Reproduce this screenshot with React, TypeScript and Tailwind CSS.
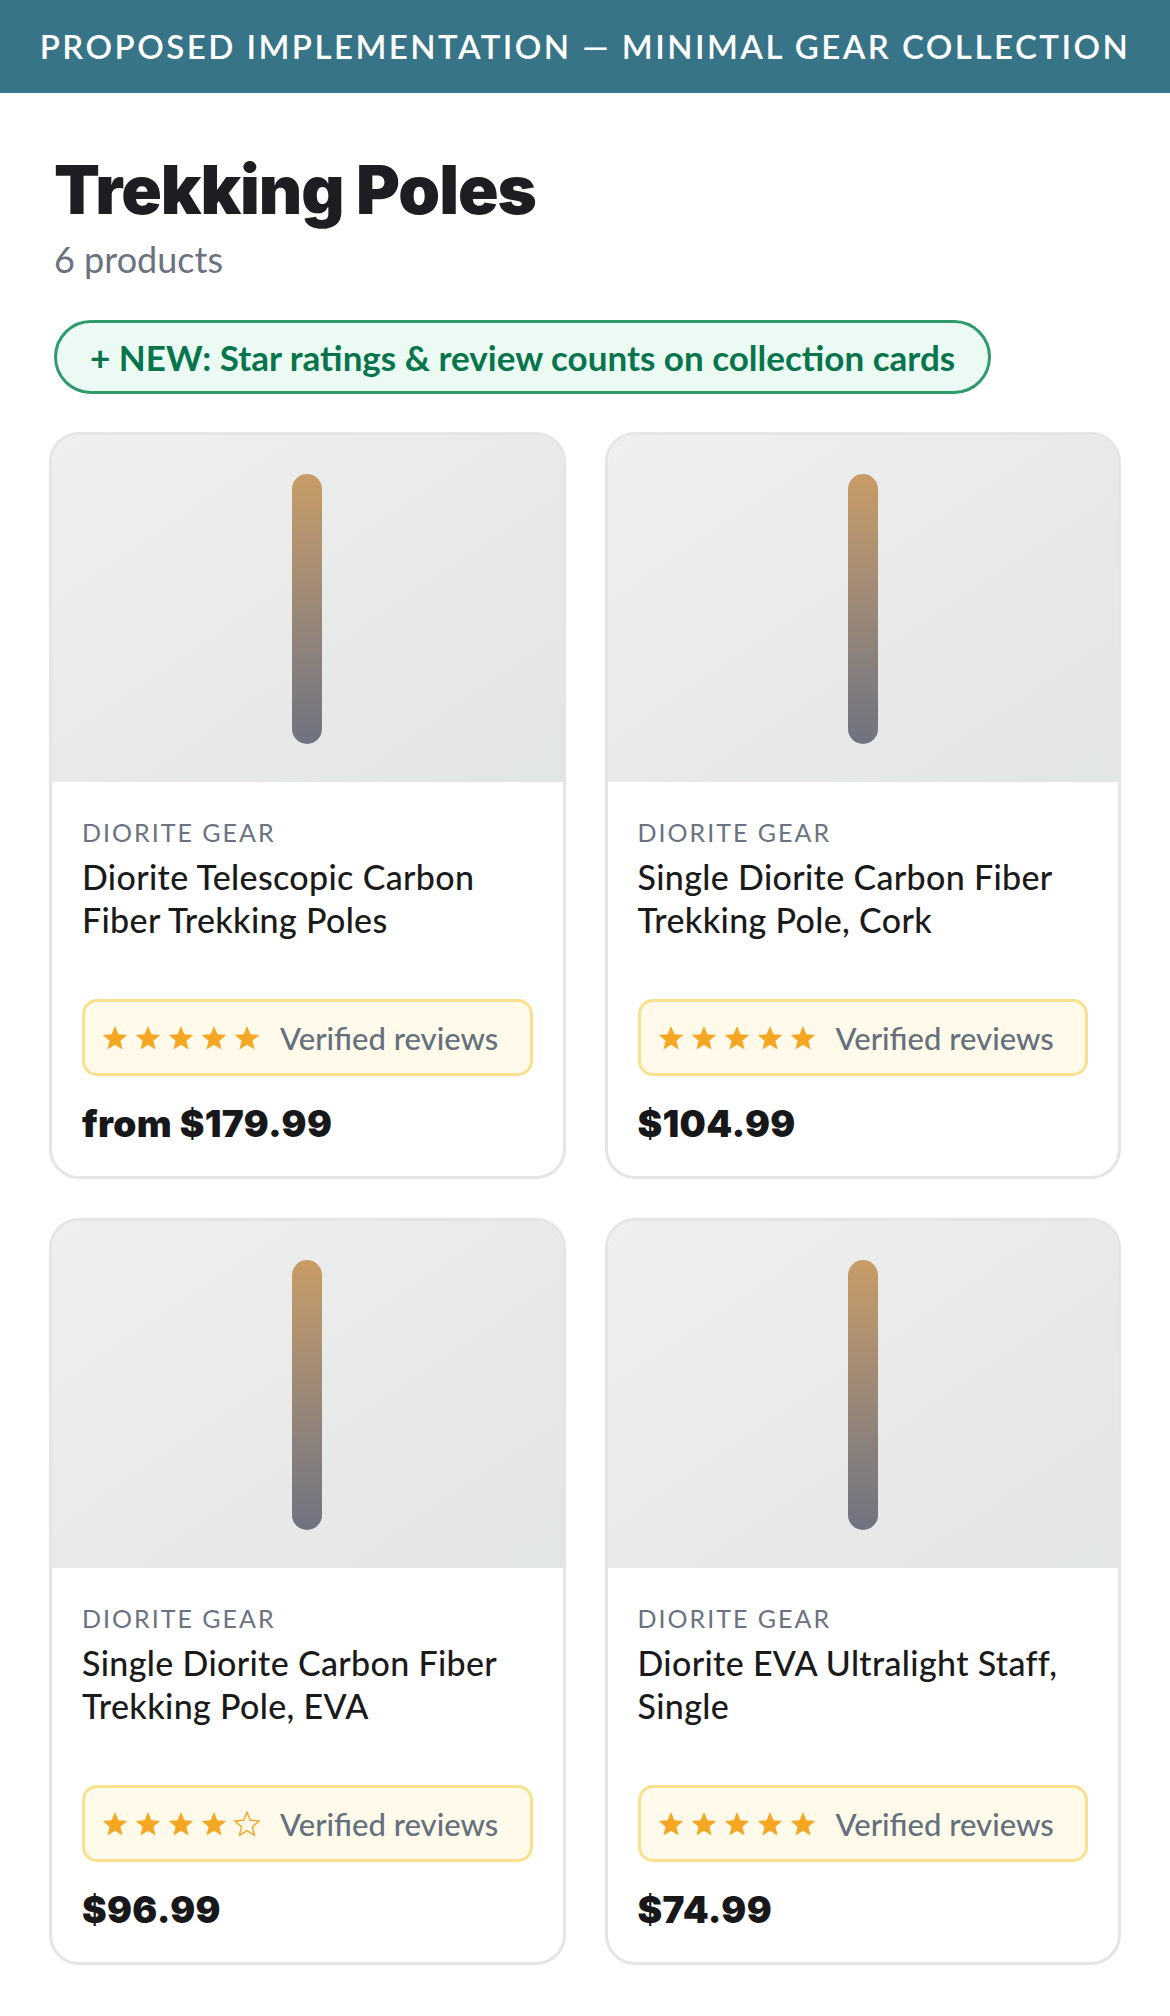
import { Fragment } from 'react'

interface Product {
  brand: string
  title: string
  price: string
  rating: number
}

const products: Product[] = [
  { brand: 'Diorite Gear', title: 'Diorite Telescopic Carbon Fiber Trekking Poles', price: 'from $179.99', rating: 5 },
  { brand: 'Diorite Gear', title: 'Single Diorite Carbon Fiber Trekking Pole, Cork', price: '$104.99', rating: 5 },
  { brand: 'Diorite Gear', title: 'Single Diorite Carbon Fiber Trekking Pole, EVA', price: '$96.99', rating: 4 },
  { brand: 'Diorite Gear', title: 'Diorite EVA Ultralight Staff, Single', price: '$74.99', rating: 5 },
]

function Star({ filled }: { filled: boolean }) {
  return (
    <svg viewBox="0 0 24 24" className="h-[26px] w-[26px]">
      <polygon
        points="12,1 15.1,8.6 23.3,9.2 17,14.5 19,22.5 12,18.2 5,22.5 7,14.5 0.7,9.2 8.9,8.6"
        fill={filled ? '#f5a623' : 'none'}
        stroke="#f5a623"
        strokeWidth={filled ? 0 : 1.3}
        strokeLinejoin="round"
      />
    </svg>
  )
}

function ProductCard({ product }: { product: Product }) {
  return (
    <div className="flex flex-col overflow-hidden rounded-[30px] border-[3px] border-[#e4e5e7] bg-white">
      <div className="flex h-[347px] items-center justify-center bg-gradient-to-br from-[#eef0ef] to-[#e1e5e4]">
        <div className="h-[270px] w-[30px] rounded-full bg-gradient-to-b from-[#c89c66] to-[#6f7381]" />
      </div>
      <div className="px-[30px] pt-[33px] pb-[29px]">
        <p className="text-[25px] leading-[34px] tracking-[0.08em] text-[#6b7280] uppercase">{product.brand}</p>
        <h3 className="mt-[6px] min-h-[86px] text-[34px] leading-[43px] font-medium tracking-[0.01em] text-[#1a1a1a]">
          {product.title}
        </h3>
        <div className="mt-[58px] flex h-[77px] items-center gap-[20px] rounded-[15px] border-[3px] border-[#f8e08e] bg-[#fffaea] px-[17px]">
          <div className="flex gap-[7px]">
            {[0, 1, 2, 3, 4].map((i) => (
              <Fragment key={i}>
                <Star filled={i < product.rating} />
              </Fragment>
            ))}
          </div>
          <span className="text-[31px] font-medium text-[#64707d]">Verified reviews</span>
        </div>
        <p className="mt-[24px] font-['Inter','Lato',sans-serif] text-[37px] leading-[47px] font-black tracking-[0.01em] text-[#18181b]">
          {product.price}
        </p>
      </div>
    </div>
  )
}

export default function App() {
  return (
    <div className="min-h-screen bg-white font-['Lato','Open_Sans',sans-serif]">
      <header className="flex h-[93px] items-center justify-center bg-[#377487]">
        <p className="text-[33px] font-semibold tracking-[0.075em] whitespace-nowrap text-white uppercase">
          Proposed Implementation — Minimal Gear Collection
        </p>
      </header>

      <div className="px-[54px] pt-[58px]">
        <h1 className="font-['Inter','Lato',sans-serif] text-[67px] leading-[77px] font-black tracking-[-0.015em] text-[#1e1e22]">
          Trekking Poles
        </h1>
        <p className="mt-[6px] text-[36px] leading-[1.4] text-[#6b7280]">6 products</p>
        <div className="mt-[36px] inline-flex h-[74px] items-center rounded-full border-[3px] border-[#2f9a6c] bg-[#ebfbf3] px-[33px] text-[35px] font-bold text-[#08744c]">
          + NEW: Star ratings &amp; review counts on collection cards
        </div>
      </div>

      <div className="mt-[38px] grid grid-cols-2 gap-[39px] px-[49px] pb-[40px]">
        {products.map((p) => (
          <ProductCard key={p.title} product={p} />
        ))}
      </div>
    </div>
  )
}
